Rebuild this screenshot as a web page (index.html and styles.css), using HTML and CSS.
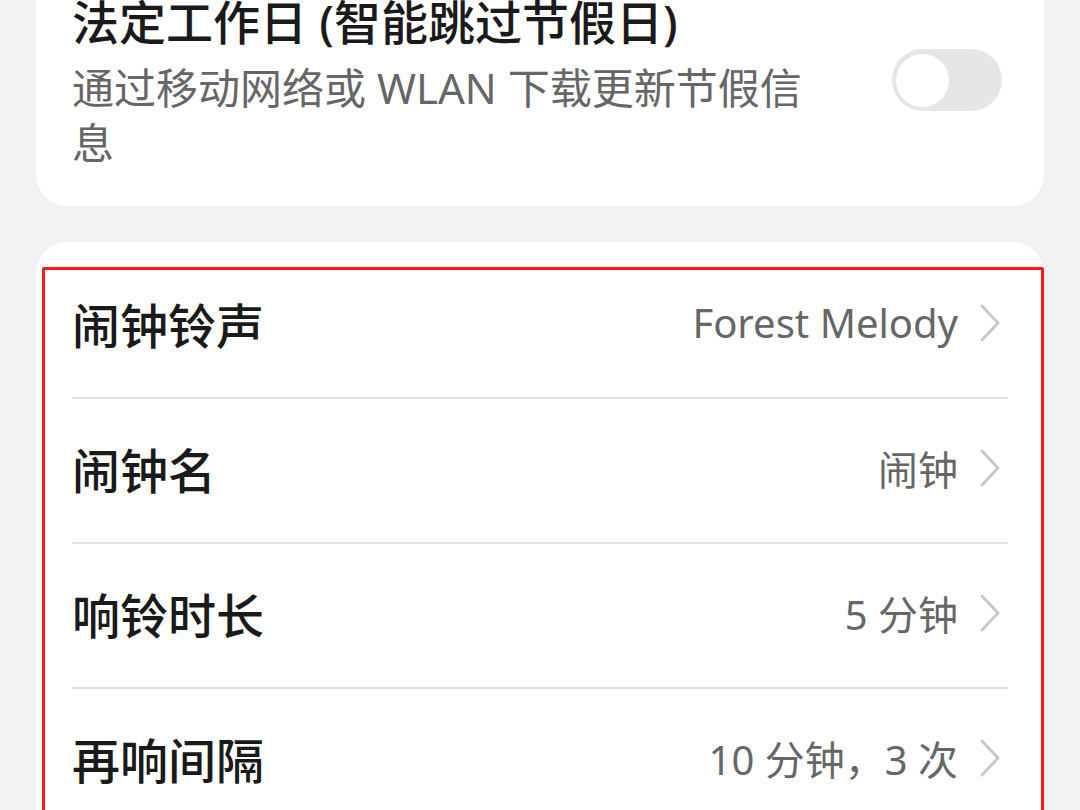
FILE: index.html
```html
<!DOCTYPE html>
<html lang="zh-CN">
<head>
    <meta charset="UTF-8">
    <meta name="viewport" content="width=device-width, initial-scale=1.0">
    <title>闹钟设置</title>
    <link rel="stylesheet" href="styles.css">
</head>
<body>
    <div class="page">
        <div class="card holiday">
            <div class="holiday-text">
                <div class="holiday-title">法定工作日 (智能跳过节假日)</div>
                <div class="holiday-desc">通过移动网络或 WLAN 下载更新节假信息</div>
            </div>
            <div class="switch">
                <div class="knob"></div>
            </div>
        </div>

        <div class="card list">
            <div class="highlight"></div>
            <div class="row">
                <span class="label">闹钟铃声</span>
                <span class="value">Forest Melody</span>
                <svg class="chevron" viewBox="0 0 24 40"><path d="M4 3 L20 20 L4 37"/></svg>
            </div>
            <div class="row">
                <span class="label">闹钟名</span>
                <span class="value">闹钟</span>
                <svg class="chevron" viewBox="0 0 24 40"><path d="M4 3 L20 20 L4 37"/></svg>
            </div>
            <div class="row">
                <span class="label">响铃时长</span>
                <span class="value">5 分钟</span>
                <svg class="chevron" viewBox="0 0 24 40"><path d="M4 3 L20 20 L4 37"/></svg>
            </div>
            <div class="row">
                <span class="label">再响间隔</span>
                <span class="value">10 分钟，3 次</span>
                <svg class="chevron" viewBox="0 0 24 40"><path d="M4 3 L20 20 L4 37"/></svg>
            </div>
        </div>
    </div>
</body>
</html>
```

FILE: styles.css
```css
body {
    margin: 0;
    height: 810px;
    overflow: hidden;
    background-color: #f1f2f4;
    font-family: "Noto Sans", "Noto Sans CJK SC", sans-serif;
}

.page {
    padding: 0 36px;
    margin-top: -41px;
}

.card {
    background-color: #fff;
    border-radius: 32px;
}

/* 节假日卡片 */
.holiday {
    display: flex;
    align-items: flex-start;
    padding: 35px 42px 36px 36px;
    margin-bottom: 36px;
}

.holiday-text {
    flex: 1;
    max-width: 750px;
}

.holiday-title {
    font-size: 47px;
    line-height: 56px;
    font-weight: 500;
    color: #1a1a1a;
}

.holiday-desc {
    margin-top: 10px;
    font-size: 42px;
    line-height: 55px;
    color: #666;
}

.switch {
    margin: 55px 0 0 auto;
    width: 110px;
    height: 62px;
    border-radius: 31px;
    background-color: #e6e6e6;
    display: flex;
    align-items: center;
    padding-left: 4px;
    box-sizing: border-box;
}

.knob {
    width: 53px;
    height: 53px;
    border-radius: 50%;
    background-color: #fff;
}

/* 设置列表 */
.list {
    position: relative;
    padding: 12px 36px 0;
    height: 700px;
}

.highlight {
    position: absolute;
    top: 25px;
    left: 6px;
    right: 0;
    bottom: -20px;
    border: 3px solid #ff1a1a;
    border-radius: 2px;
}

.row {
    display: flex;
    align-items: center;
    height: 143px;
    box-sizing: content-box;
    border-bottom: 2px solid #e2e2e2;
}

.label {
    padding-bottom: 6px;
    font-size: 48px;
    font-weight: 500;
    color: #1a1a1a;
}

.value {
    margin-left: auto;
    padding-bottom: 6px;
    font-size: 40px;
    color: #666;
}

.chevron {
    width: 24px;
    height: 40px;
    margin: 0 6px 6px 20px;
    fill: none;
    stroke: #c8c8c8;
    stroke-width: 3;
    stroke-linecap: round;
    stroke-linejoin: round;
}
```
